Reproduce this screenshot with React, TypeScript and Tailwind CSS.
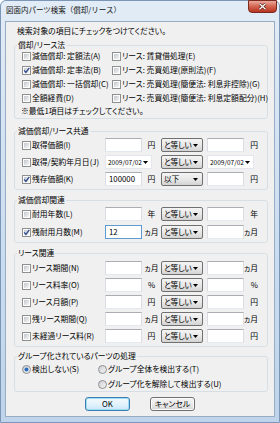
import React from 'react';

type Row = { label: string; checked?: boolean };

function CheckBox({ checked }: { checked?: boolean }) {
  return (
    <svg width="9" height="9" viewBox="0 0 9 9" className="shrink-0">
      <defs>
        <linearGradient id="cbfill" x1="0" y1="0" x2="1" y2="1">
          <stop offset="0" stopColor="#c3c7cd" />
          <stop offset="1" stopColor="#f5f5f5" />
        </linearGradient>
      </defs>
      <rect x="0.5" y="0.5" width="8" height="8" fill="#fdfdfd" stroke="#8e8f8f" />
      <rect x="2" y="2" width="5" height="5" fill="url(#cbfill)" />
      {checked && <path d="M2.2 4.4 L3.9 6.4 L7.3 1.8" stroke="#2c4a8c" strokeWidth="1.3" fill="none" />}
    </svg>
  );
}

function Radio({ checked }: { checked?: boolean }) {
  return (
    <svg width="9" height="9" viewBox="0 0 9 9" className="shrink-0">
      <defs>
        <linearGradient id="rdfill" x1="0" y1="0" x2="1" y2="1">
          <stop offset="0" stopColor="#c9ccd2" />
          <stop offset="1" stopColor="#f7f7f7" />
        </linearGradient>
      </defs>
      <circle cx="4.5" cy="4.5" r="4" fill="url(#rdfill)" stroke="#8e8f8f" />
      {checked && <circle cx="4.5" cy="4.5" r="2" fill="#2a6fc0" />}
    </svg>
  );
}

function Arrow() {
  return (
    <svg width="5" height="3" viewBox="0 0 5 3" className="shrink-0">
      <path d="M0 0 H5 L2.5 3 Z" fill="#000" />
    </svg>
  );
}

function TextBox({ value, focus }: { value?: string; focus?: boolean }) {
  return (
    <div
      className={`w-[37px] h-[14px] bg-white border pl-[3px] flex items-center leading-[10px] ${
        focus ? 'border-[#5b9bd1]' : 'border-[#abadb3] border-l-[#dbdde3] border-r-[#dbdde3] border-b-[#e3e9ef]'
      }`}
    >
      {value}
    </div>
  );
}

function Combo({ text }: { text: string }) {
  return (
    <div className="w-[42px] h-[14px] border border-[#707070] rounded-[2px] bg-gradient-to-b from-[#f4f4f4] via-[#e9e9e9] to-[#d3d3d3] flex items-center justify-between pl-[2px] pr-[4px] leading-[10px] whitespace-nowrap overflow-hidden">
      <span className="tracking-[-0.3px]">{text}</span>
      <Arrow />
    </div>
  );
}

function DateBox() {
  return (
    <div className="w-[47px] h-[14px] bg-white border border-[#e3e6ec] flex items-center justify-between pl-[2px] pr-[3px] text-[6.5px] leading-[10px] whitespace-nowrap overflow-hidden">
      <span>2009/07/02</span>
      <Arrow />
    </div>
  );
}

function Group({ title, className, children }: { title: string; className?: string; children: React.ReactNode }) {
  return (
    <div className={`ml-[8px] mr-[6px] border border-[#d5dfe5] rounded-[3px] ${className ?? ''}`}>
      <div className="-mt-[6px] ml-[2px] px-[1px] w-fit h-[10px] leading-[10px] bg-[#f0f0f0]">{title}</div>
      {children}
    </div>
  );
}

function CheckLabel({ label, checked }: Row) {
  return (
    <div className="flex items-center gap-[1px] whitespace-nowrap">
      <CheckBox checked={checked} />
      <span className="leading-[10px]">{label}</span>
    </div>
  );
}

type FieldRow = Row & { unit: string; date?: boolean; value?: string; op?: string; focus?: boolean };

function FieldRows({ rows, gap }: { rows: FieldRow[]; gap: string }) {
  return (
    <div className={`flex flex-col ${gap} pl-[7px]`}>
      {rows.map((r) => (
        <div key={r.label} className="h-[16px] grid grid-cols-[83px_37px_19px_42px_4px_37px_14px] items-center">
          <CheckLabel label={r.label} checked={r.checked} />
          {r.date ? (
            <div className="col-span-2">
              <DateBox />
            </div>
          ) : (
            <>
              <TextBox value={r.value} focus={r.focus} />
              <span className="text-center leading-[10px] whitespace-nowrap">{r.unit}</span>
            </>
          )}
          <Combo text={r.op ?? 'と等しい'} />
          <span />
          {r.date ? (
            <div className="col-span-2">
              <DateBox />
            </div>
          ) : (
            <>
              <TextBox />
              <span className="text-right leading-[10px] whitespace-nowrap">{r.unit}</span>
            </>
          )}
        </div>
      ))}
    </div>
  );
}

const methodRows: [Row, Row][] = [
  [{ label: '減価償却: 定額法(A)' }, { label: 'リース: 賃貸借処理(E)' }],
  [{ label: '減価償却: 定率法(B)', checked: true }, { label: 'リース: 売買処理(原則法)(F)' }],
  [{ label: '減価償却: 一括償却(C)' }, { label: 'リース: 売買処理(簡便法: 利息非控除)(G)' }],
  [{ label: '全額経費(D)' }, { label: 'リース: 売買処理(簡便法: 利息定額配分)(H)' }],
];

const commonRows: FieldRow[] = [
  { label: '取得価額(I)', unit: '円' },
  { label: '取得/契約年月日(J)', unit: '', date: true },
  { label: '残存価額(K)', unit: '円', checked: true, value: '100000', op: '以下' },
];

const deprRows: FieldRow[] = [
  { label: '耐用年数(L)', unit: '年' },
  { label: '残耐用月数(M)', unit: 'ヵ月', checked: true, value: '12', focus: true },
];

const leaseRows: FieldRow[] = [
  { label: 'リース期間(N)', unit: 'ヵ月' },
  { label: 'リース料率(O)', unit: '%' },
  { label: 'リース月額(P)', unit: '円' },
  { label: '残リース期間(Q)', unit: 'ヵ月' },
  { label: '未経過リース料(R)', unit: '円' },
];

export default function App() {
  return (
    <div className="w-[280px] h-[423px] bg-white font-['Noto_Sans_CJK_JP',sans-serif] [font-feature-settings:'palt'] text-[7.8px] text-black">
      <div className="w-[280px] h-[423px] flex flex-col border border-[#7b96b6] rounded-t-[6px] bg-gradient-to-b from-[#e2ecf6] via-[#cddff1] to-[#bfd4ea]">
        {/* title bar */}
        <div className="h-[20px] flex justify-between">
          <div className="pl-[5px] pt-[4px] leading-[10px] text-[#111] text-[7.5px] [font-feature-settings:normal]">図面内パーツ検索（償却/リース）</div>
          <div className="-mt-[1px] mr-[2px] w-[29px] h-[13px] rounded-b-[4px] border border-[#7a2a1e] bg-gradient-to-b from-[#eaa89c] via-[#d3634f] to-[#b8331f] flex items-center justify-center">
            <svg width="9" height="7" viewBox="0 0 9 7">
              <path d="M1.5 0.8 L7.5 6.2 M7.5 0.8 L1.5 6.2" stroke="#4a1108" strokeWidth="2.6" />
              <path d="M1.5 0.8 L7.5 6.2 M7.5 0.8 L1.5 6.2" stroke="#fff" strokeWidth="1.4" />
            </svg>
          </div>
        </div>

        {/* client */}
        <div className="mx-[4px] h-[396px] border border-[#98adc4] bg-[#f0f0f0] flex flex-col">
          <div className="mt-[4px] pl-[11px] h-[10px] leading-[10px]">検索対象の項目にチェックをつけてください。</div>

          <Group title="償却/リース法" className="mt-[9px] pb-[1px]">
            <div className="-mt-[1px] pl-[7px] flex flex-col">
              {methodRows.map(([l, r]) => (
                <div key={l.label} className="h-[14px] grid grid-cols-[90px_1fr] items-center">
                  <CheckLabel {...l} />
                  <CheckLabel {...r} />
                </div>
              ))}
            </div>
            <div className="h-[12px] leading-[12px] pl-[6px]">※最低1項目はチェックしてください。</div>
          </Group>

          <Group title="減価償却/リース共通" className="mt-[12px] pb-[2px]">
            <div className="mt-[1px]">
              <FieldRows rows={commonRows} gap="gap-[1px]" />
            </div>
          </Group>

          <Group title="減価償却関連" className="mt-[10px] pb-[2px]">
            <div className="mt-[1px]">
              <FieldRows rows={deprRows} gap="gap-[2px]" />
            </div>
          </Group>

          <Group title="リース関連" className="mt-[10px] pb-[2px]">
            <div className="mt-[2px]">
              <FieldRows rows={leaseRows} gap="gap-[1px]" />
            </div>
          </Group>

          <Group title="グループ化されているパーツの処理" className="mt-[9px]">
            <div className="mt-[1px] pl-[7px] grid grid-cols-[76px_1fr] gap-y-[1px]">
              <div className="h-[14px] flex items-center gap-[1px]">
                <Radio checked />
                <span className="leading-[10px]">検出しない(S)</span>
              </div>
              <div className="h-[14px] flex items-center gap-[1px]">
                <Radio />
                <span className="leading-[10px]">グループ全体を検出する(T)</span>
              </div>
              <div />
              <div className="h-[14px] flex items-center gap-[1px]">
                <Radio />
                <span className="leading-[10px]">グループ化を解除して検出する(U)</span>
              </div>
            </div>
          </Group>

          <div className="mt-[5px] flex justify-center gap-[20px]">
            <button className="w-[45px] h-[14px] rounded-[3px] border border-[#3c7fb1] bg-gradient-to-b from-[#f2f9fd] via-[#e4f3fc] to-[#c9e7f8] shadow-[inset_0_0_0_1px_#9fdcf7] leading-[10px]">
              OK
            </button>
            <button className="w-[45px] h-[14px] rounded-[3px] border border-[#707070] bg-gradient-to-b from-[#f3f3f3] via-[#ebebeb] to-[#d4d4d4] shadow-[inset_0_0_0_1px_#fcfcfc] leading-[10px]">
              キャンセル
            </button>
          </div>
        </div>
      </div>
    </div>
  );
}
